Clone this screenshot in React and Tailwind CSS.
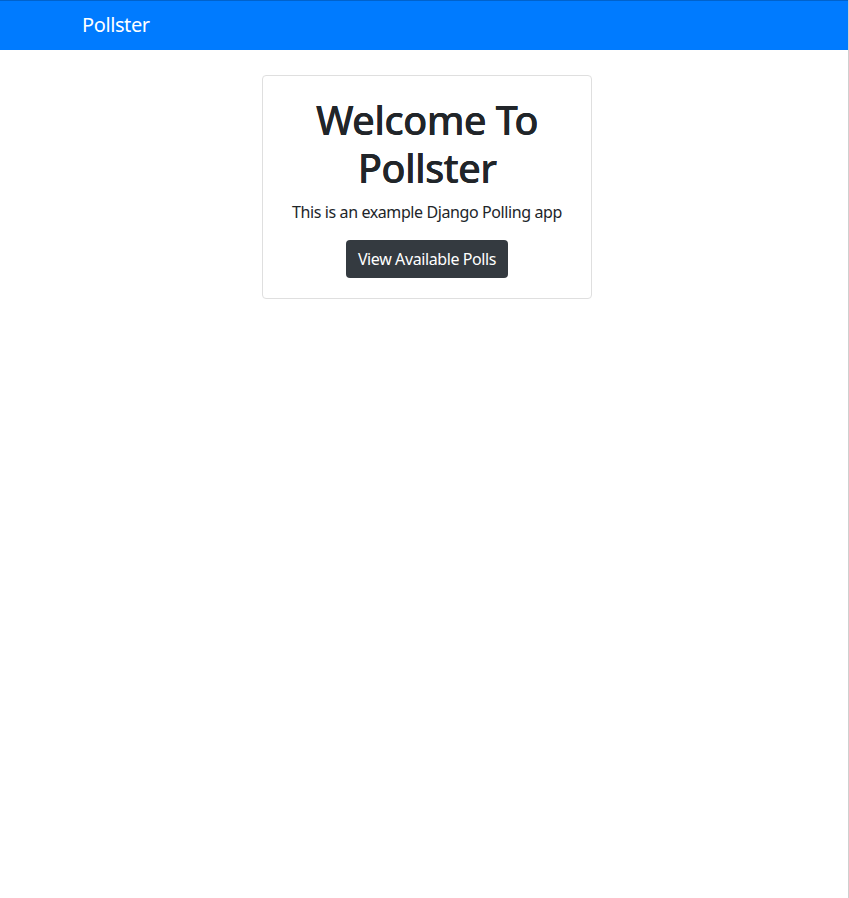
export default function App() {
  return (
    <div className="min-h-[898px] bg-white border-r border-[#cfcfcf] tracking-[-0.025em]" style={{ fontFamily: '"Noto Sans", "Open Sans", sans-serif' }}>
      <nav className="h-[50px] bg-[#007bff] border-t border-[#0062cc] flex items-center">
        <div className="w-[720px] mx-auto px-[18px] pb-[2px]">
          <span className="text-white text-[20px] leading-[30px]">Pollster</span>
        </div>
      </nav>
      <div className="pt-[25px] flex justify-center">
        <div className="w-[330px] ml-[6px] border border-[#dfdfdf] rounded-[4px] p-[20px] text-center text-[#212529]">
          <h1 className="text-[40px] leading-[48px] font-medium mb-[8px] tracking-[-0.02em] [text-shadow:0_0_0.4px_#212529]">Welcome To Pollster</h1>
          <p className="text-[16px] leading-[24px] mb-[16px]">This is an example Django Polling app</p>
          <button className="bg-[#343a40] text-white text-[16px] leading-[24px] px-[12px] py-[7px] rounded-[4px]">View Available Polls</button>
        </div>
      </div>
    </div>
  );
}
